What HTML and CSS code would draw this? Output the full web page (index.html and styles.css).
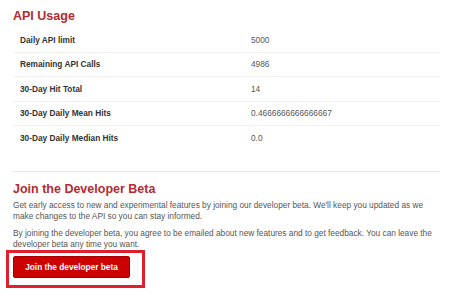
FILE: index.html
```html
<!DOCTYPE html>
<html lang="en">
<head>
    <meta charset="UTF-8">
    <meta name="viewport" content="width=device-width, initial-scale=1.0">
    <title>API Usage</title>
    <link rel="stylesheet" href="styles.css">
</head>
<body>
    <div class="container">
        <h2 class="title">API Usage</h2>
        <div class="usage">
            <div class="row"><span class="label">Daily API limit</span><span class="value">5000</span></div>
            <div class="row"><span class="label">Remaining API Calls</span><span class="value">4986</span></div>
            <div class="row"><span class="label">30-Day Hit Total</span><span class="value">14</span></div>
            <div class="row"><span class="label">30-Day Daily Mean Hits</span><span class="value">0.4666666666666667</span></div>
            <div class="row"><span class="label">30-Day Daily Median Hits</span><span class="value">0.0</span></div>
        </div>
        <hr class="divider">
        <h2 class="title beta-title">Join the Developer Beta</h2>
        <p class="text">Get early access to new and experimental features by joining our developer beta. We'll keep you updated as we make changes to the API so you can stay informed.</p>
        <p class="text second">By joining the developer beta, you agree to be emailed about new features and to get feedback. You can leave the developer beta any time you want.</p>
        <div class="btn-wrap">
            <button class="beta-btn">Join the developer beta</button>
            <span class="highlight"></span>
        </div>
    </div>
</body>
</html>
```

FILE: styles.css
```css
body {
    margin: 0;
    min-height: 299px;
    background: #fff;
    font-family: "Liberation Sans", Arial, sans-serif;
    font-size: 8.3px;
    color: #555;
}
.container {
    width: 427px;
    padding: 9px 0 12px 13px;
}
.title {
    margin: 0;
    font-size: 12.5px;
    line-height: 15px;
    font-weight: bold;
    color: #b42a30;
}
.usage {
    margin-top: 4px;
}
.row {
    display: grid;
    grid-template-columns: 231px 1fr;
    align-items: center;
    height: 23.5px;
}
.row + .row {
    border-top: 1px solid #f0f0f0;
}
.label {
    padding-left: 7px;
    font-weight: bold;
    color: #333;
}
.value {
    padding-left: 7px;
    color: #555;
}
.divider {
    margin: 21px 0 0;
    border: none;
    border-top: 1px solid #e8e8e8;
}
.beta-title {
    margin-top: 10px;
}
.text {
    margin: 3px 0 0;
    line-height: 11px;
    width: 420px;
}
.text.second {
    margin-top: 6px;
}
.btn-wrap {
    position: relative;
    width: max-content;
    margin-top: 6px;
}
.beta-btn {
    display: block;
    width: 117px;
    height: 22px;
    padding: 0;
    border: 1px solid #a80000;
    border-radius: 2px;
    background: #cc0000;
    color: #fff;
    font-family: "Liberation Sans", Arial, sans-serif;
    font-size: 8.3px;
    font-weight: bold;
}
.highlight {
    position: absolute;
    top: -6px;
    left: -7px;
    right: -15px;
    bottom: -10px;
    border: 3px solid #e01e2d;
}
```
